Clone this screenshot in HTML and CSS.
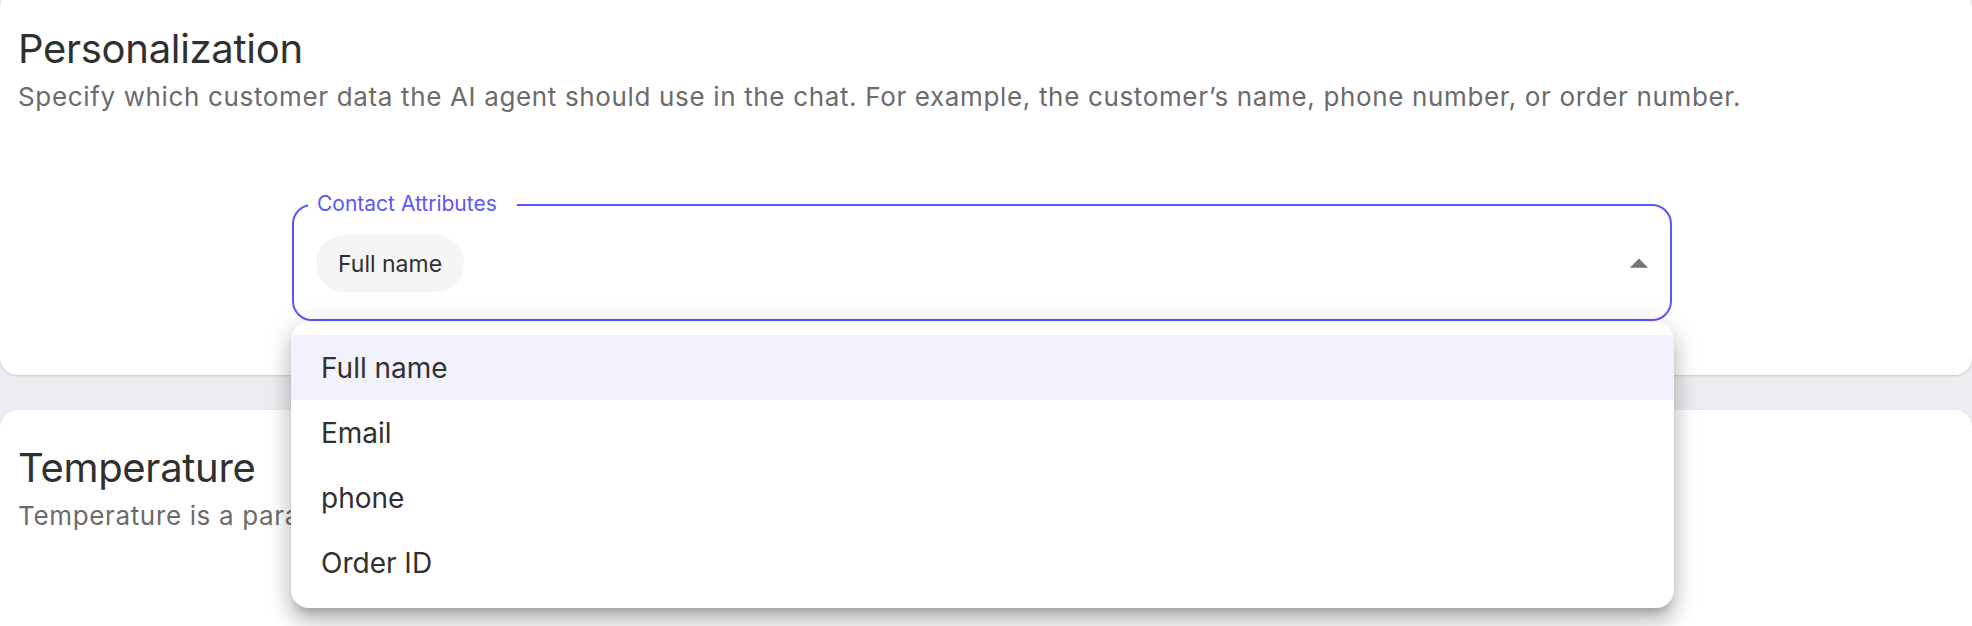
FILE: index.html
```html
<!DOCTYPE html>
<html lang="en">
<head>
  <meta charset="UTF-8">
  <meta name="viewport" content="width=device-width, initial-scale=1">
  <title>AI Agent Settings</title>
  <link rel="stylesheet" href="styles.css">
</head>
<body>
  <main class="settings">
    <section class="card">
      <h2>Personalization</h2>
      <p class="hint">Specify which customer data the AI agent should use in the chat. For example, the customer’s name, phone number, or order number.</p>

      <div class="autocomplete">
        <fieldset class="field">
          <legend>Contact Attributes</legend>
          <div class="field-row">
            <span class="chip">Full name</span>
            <svg class="arrow" viewBox="0 0 24 24" width="44" height="44" aria-hidden="true">
              <path d="M7 14l5-5 5 5z"></path>
            </svg>
          </div>
        </fieldset>

        <ul class="menu">
          <li class="active">Full name</li>
          <li>Email</li>
          <li>phone</li>
          <li>Order ID</li>
        </ul>
      </div>
    </section>

    <section class="card card-short">
      <h2>Temperature</h2>
      <p class="hint">Temperature is a parameter that controls how creative or predictable the AI agent’s answers are.</p>
    </section>
  </main>
</body>
</html>
```

FILE: styles.css
```css
/* Reset e cores */
* { margin: 0; padding: 0; box-sizing: border-box; }
:root {
  --page-bg: #ededf1;
  --card-bg: #fff;
  --text: #303030;
  --muted: #6b6b6b;
  --accent: #5b57fa;
  --chip-bg: #f5f5f5;
  --hover-bg: #f2f2fd;
}

body {
  background-color: var(--page-bg);
  color: var(--text);
  font-family: Inter, "Noto Sans", sans-serif;
  overflow: hidden;
}

.settings {
  display: flex;
  flex-direction: column;
  gap: 35px;
  margin-top: -9px;
}

.card {
  background-color: var(--card-bg);
  border-radius: 17px;
  box-shadow: 0 1px 2px rgba(0, 0, 0, 0.14), 0 0 1px rgba(0, 0, 0, 0.08);
  padding: 33px 18px 54px;
}

.card-short {
  height: 260px;
}

.card h2 {
  font-size: 40px;
  font-weight: 400;
  line-height: 49px;
  letter-spacing: -0.3px;
}

.hint {
  margin-top: 7px;
  color: var(--muted);
  font-size: 26px;
  line-height: 34px;
  letter-spacing: 0.65px;
  white-space: nowrap;
}

.autocomplete {
  position: relative;
  margin-top: 78px;
  margin-left: 274px;
  width: 1380px;
}

.field {
  border: 2px solid var(--accent);
  border-radius: 20px;
  padding: 0 22px 27px 14px;
}

.field legend {
  color: var(--accent);
  font-size: 21px;
  line-height: 24px;
  padding: 0 20px 1px 9px;
}

.field-row {
  display: flex;
  align-items: center;
  justify-content: space-between;
  height: 57px;
  margin-top: 18px;
}

.chip {
  display: inline-flex;
  align-items: center;
  height: 57px;
  padding: 0 22px;
  margin-left: 8px;
  border-radius: 29px;
  background-color: var(--chip-bg);
  font-size: 23px;
  color: var(--text);
}

.arrow {
  fill: #767676;
  margin-right: -13px;
}

/* Lista suspensa */
.menu {
  position: absolute;
  top: calc(100% + 1px);
  left: -1px;
  right: -2px;
  z-index: 10;
  list-style: none;
  background-color: var(--card-bg);
  border-radius: 18px;
  padding: 13px 0;
  box-shadow: 0 9px 9px -5px rgba(0, 0, 0, 0.2), 0 15px 18px 2px rgba(0, 0, 0, 0.14), 0 5px 26px 4px rgba(0, 0, 0, 0.12);
}

.menu li {
  height: 65px;
  display: flex;
  align-items: center;
  padding-left: 30px;
  font-size: 28px;
  color: var(--text);
}

.menu li.active {
  background-color: var(--hover-bg);
}
```
